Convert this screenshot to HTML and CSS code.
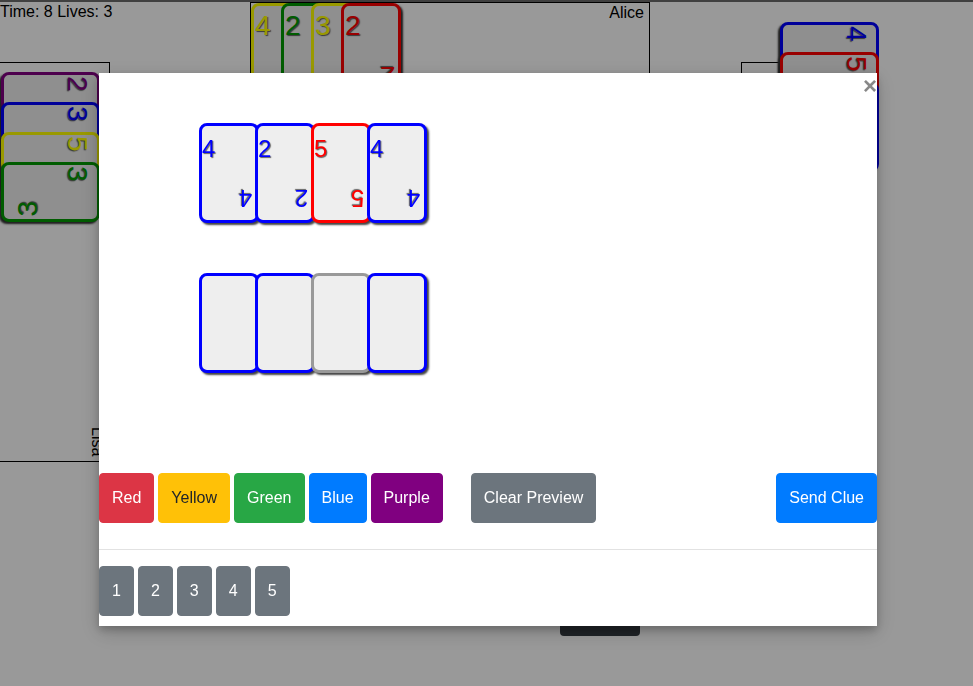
FILE: index.html
```html
<!DOCTYPE html>
<html lang="en">
<head>
<meta charset="utf-8">
<title>Hanabi</title>
<link rel="stylesheet" href="styles.css">
</head>
<body>
<div class="topbar"></div>
<div class="table">
  <div class="status">Time: 8 Lives: 3</div>

  <div class="seat seat-top">
    <div class="hand">
      <div class="card c-yellow"><span class="n">4</span><span class="n flip">4</span></div>
      <div class="card c-green"><span class="n">2</span><span class="n flip">2</span></div>
      <div class="card c-yellow"><span class="n">3</span><span class="n flip">3</span></div>
      <div class="card c-red"><span class="n">2</span><span class="n flip">2</span></div>
    </div>
    <div class="name">Alice</div>
  </div>

  <div class="seat seat-left">
    <div class="vstack">
      <div class="rc"><div class="card c-purple"><span class="n">2</span><span class="n flip">2</span></div></div>
      <div class="rc"><div class="card c-blue"><span class="n">3</span><span class="n flip">3</span></div></div>
      <div class="rc"><div class="card c-yellow"><span class="n">5</span><span class="n flip">5</span></div></div>
      <div class="rc"><div class="card c-green"><span class="n">3</span><span class="n flip">3</span></div></div>
    </div>
    <div class="name vname">Lisa</div>
  </div>

  <div class="seat seat-right"></div>
  <div class="vstack right-hand">
    <div class="rc"><div class="card c-blue"><span class="n">4</span><span class="n flip">4</span></div></div>
    <div class="rc"><div class="card c-red"><span class="n">5</span><span class="n flip">5</span></div></div>
    <div class="rc"><div class="card c-blue"><span class="n">1</span><span class="n flip">1</span></div></div>
    <div class="rc"><div class="card c-blue"><span class="n">2</span><span class="n flip">2</span></div></div>
  </div>

  <button class="dark-btn" type="button">Discard</button>
</div>

<div class="overlay">
  <div class="modal">
    <span class="close">&times;</span>
    <div class="cards-row">
      <div class="card m c-blue"><span class="n">4</span><span class="n flip">4</span></div>
      <div class="card m c-blue"><span class="n">2</span><span class="n flip">2</span></div>
      <div class="card m c-red"><span class="n">5</span><span class="n flip">5</span></div>
      <div class="card m c-blue"><span class="n">4</span><span class="n flip">4</span></div>
    </div>
    <div class="cards-row second">
      <div class="card m c-blue"></div>
      <div class="card m c-blue"></div>
      <div class="card m c-gray"></div>
      <div class="card m c-blue"></div>
    </div>
    <div class="btn-row">
      <button class="btn b-red" type="button">Red</button>
      <button class="btn b-yellow" type="button">Yellow</button>
      <button class="btn b-green" type="button">Green</button>
      <button class="btn b-blue" type="button">Blue</button>
      <button class="btn b-purple" type="button">Purple</button>
      <button class="btn b-gray clear" type="button">Clear Preview</button>
      <button class="btn b-blue send" type="button">Send Clue</button>
    </div>
    <div class="footer">
      <button class="btn b-gray" type="button">1</button>
      <button class="btn b-gray" type="button">2</button>
      <button class="btn b-gray" type="button">3</button>
      <button class="btn b-gray" type="button">4</button>
      <button class="btn b-gray" type="button">5</button>
    </div>
  </div>
</div>
</body>
</html>
```

FILE: styles.css
```css
html, body {
  margin: 0;
  padding: 0;
  background: #fff;
  font-family: "Liberation Sans", Arial, sans-serif;
  font-size: 16px;
  color: #000;
  overflow: hidden;
}

.topbar {
  height: 2px;
  background: #6b6b6b;
}

.table {
  position: relative;
  height: 684px;
}

.status {
  line-height: 18px;
  padding-top: 1px;
}

/* seats around the game table (free canvas) */
.seat {
  position: absolute;
  box-sizing: border-box;
  border: 1px solid #000;
}

.seat-top {
  left: 250px;
  top: 0;
  width: 400px;
  height: 110px;
  display: flex;
  align-items: flex-start;
}

.seat-left {
  left: -1px;
  top: 60px;
  width: 111px;
  height: 400px;
  display: flex;
  flex-direction: column;
  padding-top: 9px;
}

.seat-right {
  left: 741px;
  top: 60px;
  width: 110px;
  height: 400px;
}

.right-hand {
  position: absolute;
  left: 780px;
  top: 20px;
}

.hand {
  display: flex;
}

.hand .card {
  margin-right: -30px;
}

.name {
  margin-left: auto;
  padding: 1px 5px 0 0;
  line-height: 18px;
}

.vname {
  margin-top: auto;
  align-self: flex-end;
  writing-mode: vertical-rl;
  padding: 0 3px 5px 0;
}

.vstack {
  display: flex;
  flex-direction: column;
}

.seat-left .vstack {
  margin-left: 1px;
}

.rc {
  width: 99px;
  height: 60px;
  flex: none;
}

.rc + .rc {
  margin-top: -30px;
}

.rc .card {
  height: 99px;
  transform-origin: 0 0;
  transform: translateX(99px) rotate(90deg);
}

/* cards */
.card {
  position: relative;
  z-index: 0;
  box-sizing: border-box;
  width: 60px;
  height: 100px;
  flex: none;
  border: 3px solid #000;
  border-radius: 8px;
  background: #eee;
  box-shadow: 2px 2px 2px #333;
  display: flex;
  flex-direction: column;
  justify-content: space-between;
  font-size: 28px;
  line-height: 32px;
  padding: 4px 2px 8px 1px;
}

.n {
  align-self: flex-start;
  text-shadow: 1px 1px 1px rgba(0, 0, 0, 0.6);
}

.n.flip {
  align-self: flex-end;
  transform: rotate(180deg);
}

.c-blue { border-color: #0000ff; color: #0000ff; }
.c-red { border-color: #ff0000; color: #ff0000; }
.c-yellow { border-color: #ffff00; color: #ffff00; }
.c-green { border-color: #009a00; color: #009a00; }
.c-purple { border-color: #800080; color: #800080; }
.c-gray { border-color: #999999; color: #999999; }

.dark-btn {
  position: absolute;
  left: 560px;
  top: 584px;
  width: 80px;
  height: 50px;
  border: 0;
  border-radius: 4px;
  background: #343a40;
  color: #fff;
  font: 16px "Liberation Sans", Arial, sans-serif;
}

/* modal */
.overlay {
  position: fixed;
  inset: 0;
  background: rgba(0, 0, 0, 0.4);
  z-index: 10;
}

.modal {
  position: relative;
  box-sizing: border-box;
  margin: 73px 0 0 99px;
  width: 778px;
  height: 553px;
  background: #fff;
  padding: 50px 0 10px 0;
  box-shadow: 0 4px 8px 0 rgba(0, 0, 0, 0.2), 0 6px 20px 0 rgba(0, 0, 0, 0.19);
}

.close {
  position: absolute;
  top: 1px;
  right: 0;
  color: #888;
  font-size: 24px;
  font-weight: bold;
  line-height: 24px;
}

.cards-row {
  display: flex;
  margin-left: 100px;
  height: 100px;
}

.cards-row.second {
  margin-top: 50px;
}

.card.m {
  font-size: 24px;
  line-height: 28px;
  padding: 9px 4px 8px 0;
  box-shadow: 2px 2px 2px #444;
}

.cards-row .card {
  margin-right: -4px;
}

.btn-row {
  display: flex;
  gap: 4px;
  margin-top: 100px;
}

.btn {
  box-sizing: border-box;
  height: 50px;
  padding: 0 12px;
  border: 1px solid transparent;
  border-radius: 4px;
  font-family: "Liberation Sans", Arial, sans-serif;
  font-size: 16px;
  line-height: 24px;
  color: #fff;
  flex: none;
}

.b-red { background: #dc3545; border-color: #dc3545; }
.b-yellow { background: #ffc107; border-color: #ffc107; color: #212529; }
.b-green { background: #28a745; border-color: #28a745; }
.b-blue { background: #007bff; border-color: #007bff; }
.b-purple { background: #800080; border-color: #800080; }
.b-gray { background: #6c757d; border-color: #6c757d; }

.clear {
  margin-left: 24px;
}

.send {
  margin-left: auto;
}

.footer {
  margin-top: 26px;
  border-top: 1px solid #e2e2e2;
  padding-top: 16px;
  display: flex;
  gap: 4px;
}
```
